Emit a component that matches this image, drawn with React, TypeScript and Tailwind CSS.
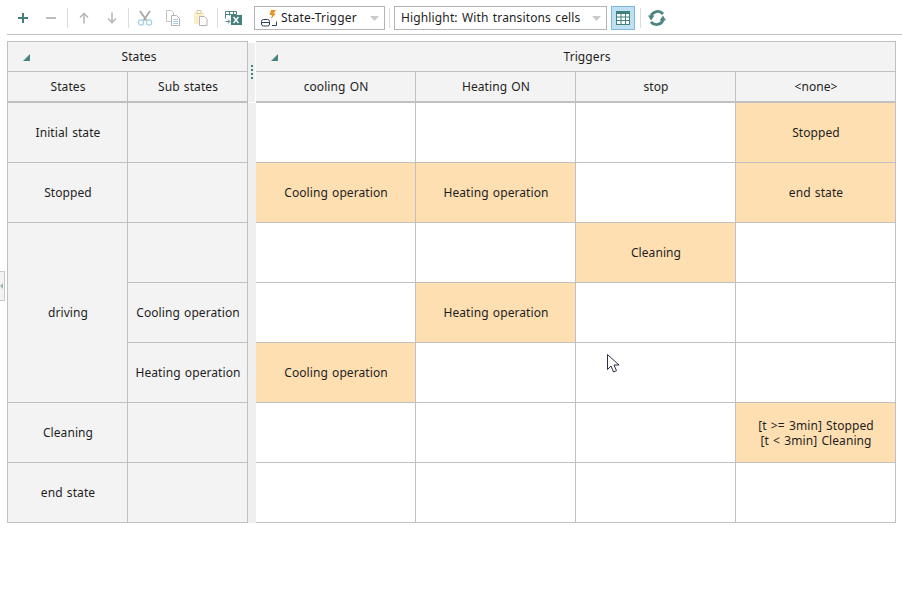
import { ReactNode } from 'react';

const triggers = ['cooling ON', 'Heating ON', 'stop', '<none>'];

// one row of the trigger table per sub row on the left
const transitions: string[][] = [
  ['', '', '', 'Stopped'],
  ['Cooling operation', 'Heating operation', '', 'end state'],
  ['', '', 'Cleaning', ''],
  ['', 'Heating operation', '', ''],
  ['Cooling operation', '', '', ''],
  ['', '', '', '[t >= 3min] Stopped\n[t < 3min] Cleaning'],
  ['', '', '', ''],
];

const IconButton = ({ children }: { children: ReactNode }) => (
  <div className="flex h-[24px] w-[28px] items-center justify-center">{children}</div>
);

const Separator = ({ className = 'w-[5px]' }: { className?: string }) => (
  <div className={`flex h-[20px] justify-center ${className}`}>
    <div className="h-full w-[1px] bg-[#dcdcdc]" />
  </div>
);

const Combo = ({ width, children }: { width: string; children: ReactNode }) => (
  <div className={`flex h-[24px] items-center border border-[#b4b4b4] bg-white ${width}`}>
    {children}
    <svg width="9" height="5" viewBox="0 0 9 5" className="ml-auto mr-[5px]">
      <path d="M0 0h9L4.500 5z" fill="#cacaca" />
    </svg>
  </div>
);

const CornerMark = () => (
  <svg width="7" height="7" viewBox="0 0 7 7" className="absolute left-[15px] top-[12px]">
    <path d="M7 0V7H0z" fill="#4b8584" />
  </svg>
);

const Head = ({ className = '', children }: { className?: string; children: ReactNode }) => (
  <div className={`flex items-center justify-center border-r border-[#c0c0c0] bg-[#f3f3f3] pl-[1px] ${className}`}>
    {children}
  </div>
);

const LeftCell = ({ className = '', children }: { className?: string; children?: ReactNode }) => (
  <div className={`flex items-center justify-center border-r border-b border-[#c0c0c0] bg-[#f3f3f3] pl-[1px] ${className}`}>
    {children}
  </div>
);

function Toolbar() {
  return (
    <div className="ml-[7px] flex h-[35px] items-center border-b border-[#c0c0c0] pl-[2px] pt-[2px]">
      <IconButton>
        <svg width="12" height="12" viewBox="0 0 12 12"><path d="M5 1h2v4h4v2H7v4H5V7H1V5h4z" fill="#437f7d" /></svg>
      </IconButton>
      <IconButton>
        <svg width="12" height="12" viewBox="0 0 12 12"><path d="M1 5h10v2H1z" fill="#bdbdbd" /></svg>
      </IconButton>
      <Separator />
      <IconButton>
        <svg width="12" height="12" viewBox="0 0 12 12" fill="none" stroke="#b9b9b9" strokeWidth="1.6"><path d="M6 11.500V1.500M2 5.500l4-4 4 4" /></svg>
      </IconButton>
      <IconButton>
        <svg width="12" height="12" viewBox="0 0 12 12" fill="none" stroke="#b9b9b9" strokeWidth="1.6"><path d="M6 0.500v10M2 6.500l4 4 4-4" /></svg>
      </IconButton>
      <Separator />
      <IconButton>
        <svg width="16" height="16" viewBox="0 0 16 16" fill="none">
          <path d="M3 1l6.500 9.500M13 1L6.500 10.500" stroke="#a8a8a8" strokeWidth="1.8" />
          <circle cx="4" cy="12.500" r="2.600" stroke="#a5d3e6" strokeWidth="1.300" />
          <circle cx="12" cy="12.500" r="2.600" stroke="#a5d3e6" strokeWidth="1.300" />
        </svg>
      </IconButton>
      <IconButton>
        <svg width="16" height="16" viewBox="0 0 16 16" fill="none">
          <path d="M1.500 0.500h5l2 2v9h-7z" fill="#fff" stroke="#c4c4c4" />
          <path d="M6.500 5.500h5l3 3v7h-8z" fill="#fff" stroke="#b4b4b4" />
          <path d="M8 9.500h5M8 11.500h5M8 13.500h5" stroke="#a5cfe2" />
        </svg>
      </IconButton>
      <IconButton>
        <svg width="16" height="16" viewBox="0 0 16 16" fill="none">
          <path d="M1 2h10v12H1z" fill="#fbefc6" />
          <path d="M4 0.500h4v3H4z" fill="#fff" stroke="#d0c8a8" />
          <path d="M6.500 6.500h5l2.500 2.500v6.500H6.500z" fill="#fff" stroke="#b4b4b4" />
        </svg>
      </IconButton>
      <Separator />
      <IconButton>
        <svg width="18" height="16" viewBox="0 0 18 16" fill="none">
          <path d="M0.500 1.500h11M0.500 4.500h11M0.500 1.500v7M4.500 1.500v4M8.500 1.500v3M11.500 1.500v3" stroke="#4d8583" />
          <path d="M0.500 11.500h4M3 9.500l2 2-2 2" stroke="#4d8583" />
          <path d="M6 5h11v10H6z" fill="#437f7d" />
          <path d="M8.500 7l5 6M13.500 7l-5 6" stroke="#fff" strokeWidth="1.4" />
        </svg>
      </IconButton>
      <div className="w-[6px]" />
      <Combo width="w-[131px]">
        <svg width="17" height="17" viewBox="0 0 17 17" fill="none" className="ml-[6px] mr-[3px]">
          <path d="M10 0h5l-2.500 3.500H15L10 9l1-4H8.500z" fill="#e8932a" />
          <rect x="0.500" y="9.500" width="8" height="6.500" rx="2" stroke="#2d4058" />
          <path d="M0.500 12.500h8M11 15.500h4.500v-4" stroke="#2d4058" />
        </svg>
        <span className="tracking-[0.25px]">State-Trigger</span>
      </Combo>
      <Separator className="w-[9px]" />
      <Combo width="w-[213px]">
        <span className="ml-[6px] tracking-[0.14px]">Highlight: With transitons cells</span>
      </Combo>
      <div className="ml-[4px] flex h-[24px] w-[24px] items-center justify-center border border-[#7fb8da] bg-[#bfe0f2]">
        <svg width="14" height="14" viewBox="0 0 14 14" fill="none">
          <rect x="0.500" y="0.500" width="13" height="13" fill="#fff" stroke="#437f7d" />
          <path d="M0 0h14v3H0z" fill="#437f7d" />
          <path d="M0.500 6h13M0.500 9.500h13M5 3v10M9.500 3v10" stroke="#437f7d" />
        </svg>
      </div>
      <Separator className="w-[10px]" />
      <div className="ml-[-2px]">
        <IconButton>
          <svg width="18" height="18" viewBox="0 0 18 18" fill="none">
            <path d="M15 5A7 7 0 0 0 3 7" stroke="#4d8583" strokeWidth="2.800" />
            <path d="M0 6.500h6.500L3 11.500z" fill="#4d8583" />
            <path d="M3 13A7 7 0 0 0 15 11" stroke="#4d8583" strokeWidth="2.800" />
            <path d="M18 11.500h-6.500L15 6.500z" fill="#4d8583" />
          </svg>
        </IconButton>
      </div>
    </div>
  );
}

function StatesTable() {
  return (
    <div className="w-[241px] border-l border-t border-[#c0c0c0]">
      <Head className="relative h-[30px] border-b pl-[23px]">
        <CornerMark />
        States
      </Head>
      <div className="flex h-[31px] border-b-2 border-[#c0c0c0]">
        <Head className="w-[120px]">States</Head>
        <Head className="w-[120px]">Sub states</Head>
      </div>
      <div className="grid grid-cols-[120px_120px] grid-rows-[repeat(7,60px)]">
        <LeftCell>Initial state</LeftCell>
        <LeftCell />
        <LeftCell>Stopped</LeftCell>
        <LeftCell />
        <LeftCell className="row-span-3">driving</LeftCell>
        <LeftCell />
        <LeftCell>Cooling operation</LeftCell>
        <LeftCell>Heating operation</LeftCell>
        <LeftCell>Cleaning</LeftCell>
        <LeftCell />
        <LeftCell>end state</LeftCell>
        <LeftCell />
      </div>
    </div>
  );
}

function TriggersTable() {
  return (
    <div className="w-[640px] border-t border-[#c0c0c0]">
      <Head className="relative h-[30px] border-b pl-[23px]">
        <CornerMark />
        Triggers
      </Head>
      <div className="flex h-[31px] border-b-2 border-[#c0c0c0]">
        {triggers.map((name) => (
          <Head key={name} className="w-[160px]">{name}</Head>
        ))}
      </div>
      <div className="grid grid-cols-[repeat(4,160px)] grid-rows-[repeat(7,60px)]">
        {transitions.flatMap((row, r) =>
          row.map((text, c) => (
            <div
              key={`${r}-${c}`}
              className={`flex items-center justify-center whitespace-pre-line border-r border-b border-[#c0c0c0] pl-[1px] text-center leading-[15px] ${text ? 'bg-[#fedfb2]' : 'bg-white'}`}
            >
              {text}
            </div>
          ))
        )}
      </div>
    </div>
  );
}

export default function App() {
  return (
    <div className="relative h-[592px] w-[902px] overflow-hidden bg-white font-['Noto_Sans',sans-serif] text-[12px] tracking-[0.08px] text-[#1e1e1e] [word-spacing:1px]">
      <Toolbar />
      <div className="flex pl-[7px] pt-[6px]">
        <StatesTable />
        <div className="mt-[2px] h-[480px] w-[8px] bg-[#efefef]">
          <div className="flex h-[60px] flex-col items-center gap-[2px] border-r border-b border-white pt-[22px]">
            <div className="h-[2px] w-[2px] bg-[#437f7d]" />
            <div className="h-[2px] w-[2px] bg-[#437f7d]" />
            <div className="h-[2px] w-[2px] bg-[#437f7d]" />
            <div className="h-[2px] w-[2px] bg-[#437f7d]" />
          </div>
        </div>
        <TriggersTable />
      </div>
      {/* collapse handle on the window edge */}
      <div className="absolute left-0 top-[271px] flex h-[30px] w-[5px] items-center border border-l-0 border-[#c8c8c8] bg-[#f3f3f3]">
        <svg width="3" height="6" viewBox="0 0 3 6"><path d="M3 0v6L0 3z" fill="#9fb5b4" /></svg>
      </div>
      {/* mouse pointer */}
      <svg width="14" height="21" viewBox="0 0 14 21" className="absolute left-[607px] top-[354px]">
        <path d="M0.500 0.500v15l3.500-3.500 2.500 6 3-1.300-2.500-5.700h5z" fill="#fff" stroke="#2a2f45" />
      </svg>
    </div>
  );
}
